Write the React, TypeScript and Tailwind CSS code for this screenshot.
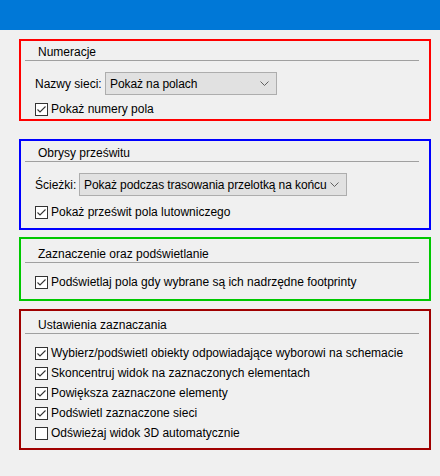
import React from "react";

function Check({ checked }: { checked: boolean }) {
  return (
    <svg width="13" height="13" viewBox="0 0 13 13" className="shrink-0">
      <rect x="0.5" y="0.5" width="12" height="12" fill="#ffffff" stroke="#333333" />
      {checked && (
        <path d="M2.5 6.5 L5 9 L10.5 3.5" fill="none" stroke="#333333" strokeWidth="1.1" />
      )}
    </svg>
  );
}

function CheckRow({ label, checked = true, cls = "" }: { label: string; checked?: boolean; cls?: string }) {
  return (
    <div className={"flex items-center gap-[3px] pl-[14px] whitespace-nowrap " + cls}>
      <Check checked={checked} />
      <span>{label}</span>
    </div>
  );
}

function Select({ text, w, h }: { text: string; w: string; h: string }) {
  return (
    <div className={"flex items-center justify-between border border-[#adadad] bg-[#e1e1e1] pl-[4px] pr-[7px] whitespace-nowrap " + w + " " + h}>
      <span className="tracking-[-0.1px]">{text}</span>
      <svg width="9" height="5" viewBox="0 0 9 5" className="shrink-0">
        <path d="M0.5 0.5 L4.5 4.5 L8.5 0.5" fill="none" stroke="#606060" strokeWidth="1" />
      </svg>
    </div>
  );
}

function Title({ text, mt }: { text: string; mt: string }) {
  return (
    <>
      <div className={"h-[16px] leading-[16px] pl-[17px] " + mt}>{text}</div>
      <div className="ml-[4px] h-px w-[394px] bg-[#a0a0a0]" />
    </>
  );
}

export default function App() {
  return (
    <div
      className="w-[440px] h-[476px] bg-[#f0f0f0] text-[12px] text-black overflow-hidden"
      style={{ fontFamily: '"Liberation Sans", Arial, sans-serif' }}
    >
      <div className="h-[30px] bg-[#0078d7]" />

      <div className="ml-[19px] mt-[9px] w-[412px] h-[82px] border-2 border-[#ff0000] flex flex-col">
        <Title text="Numeracje" mt="mt-[3px]" />
        <div className="flex items-center mt-[11px] pl-[14px]">
          <span className="w-[70px] whitespace-nowrap">Nazwy sieci:</span>
          <Select text="Pokaż na polach" w="w-[172px]" h="h-[23px]" />
        </div>
        <CheckRow label="Pokaż numery pola" cls="mt-[6px] h-[16px]" />
      </div>

      <div className="ml-[19px] mt-[18px] w-[412px] h-[91px] border-2 border-[#0000ff] flex flex-col">
        <Title text="Obrysy prześwitu" mt="mt-[4px]" />
        <div className="flex items-center mt-[11px] pl-[14px]">
          <span className="w-[44px] whitespace-nowrap">Ścieżki:</span>
          <Select text="Pokaż podczas trasowania przelotką na końcu" w="w-[268px]" h="h-[23px]" />
        </div>
        <CheckRow label="Pokaż prześwit pola lutowniczego" cls="mt-[8px] h-[16px]" />
      </div>

      <div className="ml-[19px] mt-[7px] w-[412px] h-[64px] border-2 border-[#00c800] flex flex-col">
        <Title text="Zaznaczenie oraz podświetlanie" mt="mt-[7px]" />
        <CheckRow label="Podświetlaj pola gdy wybrane są ich nadrzędne footprinty" cls="mt-[11px] h-[16px]" />
      </div>

      <div className="ml-[19px] mt-[8px] w-[412px] h-[141px] border-2 border-[#a00000] flex flex-col">
        <Title text="Ustawienia zaznaczania" mt="mt-[6px]" />
        <div className="flex flex-col mt-[9px]">
          <CheckRow label="Wybierz/podświetl obiekty odpowiadające wyborowi na schemacie" cls="h-[20px]" />
          <CheckRow label="Skoncentruj widok na zaznaczonych elementach" cls="h-[20px]" />
          <CheckRow label="Powiększa zaznaczone elementy" cls="h-[20px]" />
          <CheckRow label="Podświetl zaznaczone sieci" cls="h-[20px]" />
          <CheckRow label="Odświeżaj widok 3D automatycznie" checked={false} cls="h-[20px]" />
        </div>
      </div>
    </div>
  );
}
